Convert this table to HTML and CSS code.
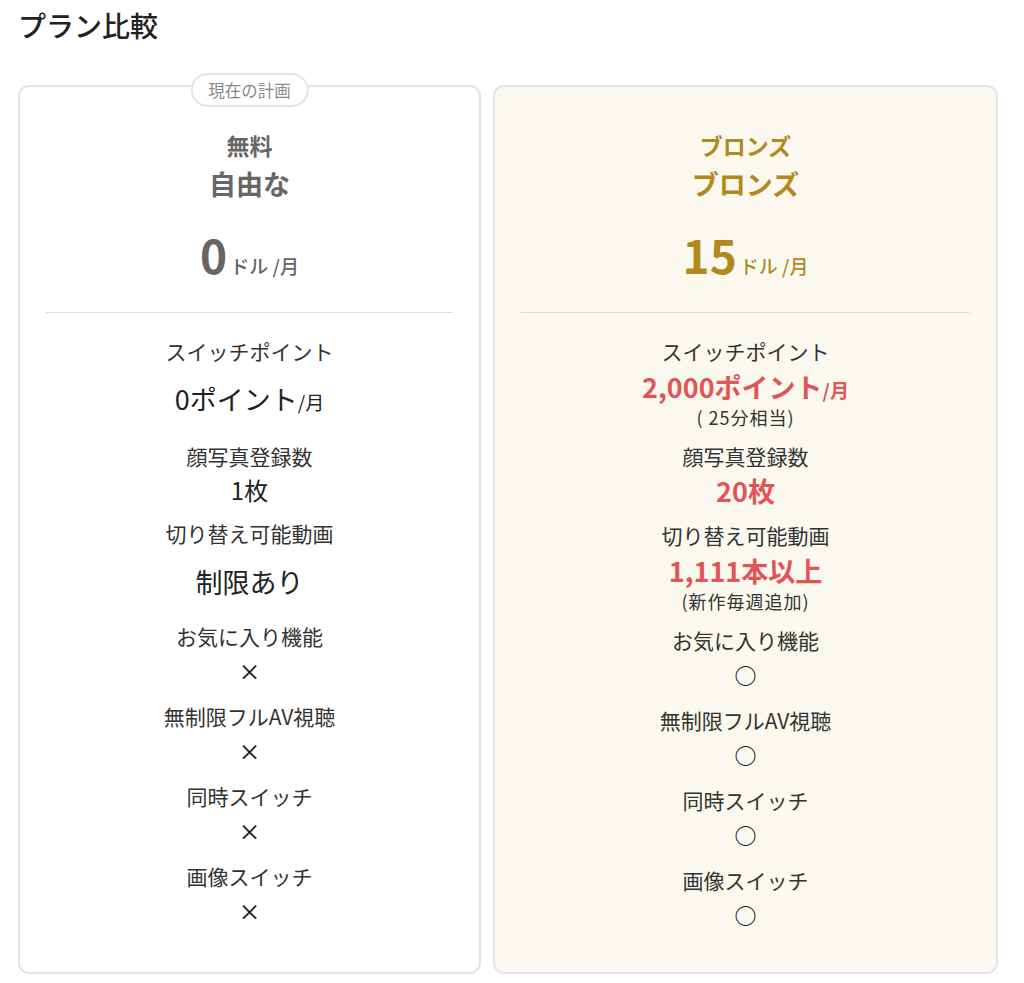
FILE: index.html
```html
<!DOCTYPE html>
<html lang="ja">
<head>
<meta charset="utf-8">
<title>プラン比較</title>
<link rel="stylesheet" href="styles.css">
</head>
<body>
<main class="page">
  <h1 class="title">プラン比較</h1>
  <div class="plans">
    <section class="card card-free">
      <span class="badge">現在の計画</span>
      <div class="head">
        <div class="plan-name">無料</div>
        <div class="plan-sub">自由な</div>
        <div class="price"><span class="amount">0</span><span class="unit">ドル /月</span></div>
      </div>
      <div class="divider"></div>
      <div class="features">
        <div class="feat">
          <div class="label">スイッチポイント</div>
          <div class="val val-points">0ポイント<span class="per">/月</span></div>
        </div>
        <div class="feat">
          <div class="label">顔写真登録数</div>
          <div class="val val-photos">1枚</div>
        </div>
        <div class="feat">
          <div class="label">切り替え可能動画</div>
          <div class="val val-videos">制限あり</div>
        </div>
        <div class="feat">
          <div class="label">お気に入り機能</div>
          <div class="val mark mark-x">×</div>
        </div>
        <div class="feat">
          <div class="label">無制限フルAV視聴</div>
          <div class="val mark mark-x">×</div>
        </div>
        <div class="feat">
          <div class="label">同時スイッチ</div>
          <div class="val mark mark-x">×</div>
        </div>
        <div class="feat">
          <div class="label">画像スイッチ</div>
          <div class="val mark mark-x">×</div>
        </div>
      </div>
    </section>
    <section class="card card-bronze">
      <div class="head">
        <div class="plan-name">ブロンズ</div>
        <div class="plan-sub">ブロンズ</div>
        <div class="price"><span class="amount">15</span><span class="unit">ドル /月</span></div>
      </div>
      <div class="divider"></div>
      <div class="features">
        <div class="feat">
          <div class="label">スイッチポイント</div>
          <div class="val hi hi-points">2,000ポイント<span class="per">/月</span></div>
          <div class="note">( 25分相当)</div>
        </div>
        <div class="feat">
          <div class="label">顔写真登録数</div>
          <div class="val hi hi-photos">20枚</div>
        </div>
        <div class="feat">
          <div class="label">切り替え可能動画</div>
          <div class="val hi hi-videos">1,111本以上</div>
          <div class="note note-lg">(新作毎週追加)</div>
        </div>
        <div class="feat">
          <div class="label">お気に入り機能</div>
          <div class="val mark mark-o">○</div>
        </div>
        <div class="feat">
          <div class="label">無制限フルAV視聴</div>
          <div class="val mark mark-o">○</div>
        </div>
        <div class="feat">
          <div class="label">同時スイッチ</div>
          <div class="val mark mark-o">○</div>
        </div>
        <div class="feat">
          <div class="label">画像スイッチ</div>
          <div class="val mark mark-o">○</div>
        </div>
      </div>
    </section>
  </div>
</main>
</body>
</html>
```

FILE: styles.css
```css
* { box-sizing: border-box; }

html, body {
  margin: 0;
  padding: 0;
  background: #ffffff;
}

body {
  font-family: "Noto Sans CJK JP", "Noto Sans", sans-serif;
  color: #333333;
}

.page {
  padding: 5px 26px 0 18px;
}

.title {
  margin: 0;
  font-size: 28px;
  line-height: 40px;
  font-weight: 500;
  color: #222222;
}

.plans {
  margin-top: 40px;
  display: grid;
  grid-template-columns: 463px 505px;
  column-gap: 12px;
  align-items: stretch;
}

.card {
  position: relative;
  border: 2px solid #e4e4e4;
  border-radius: 11px;
  padding: 41px 26px 40px;
  text-align: center;
  background: #ffffff;
}

.card-bronze {
  background: #fbf9ef;
}

.badge {
  position: absolute;
  top: -14px;
  left: 50%;
  transform: translateX(-50%);
  height: 34px;
  padding: 0 16px;
  border: 2px solid #e4e4e4;
  border-radius: 17px;
  background: #ffffff;
  color: #8a8a8a;
  font-size: 16.5px;
  line-height: 30px;
  white-space: nowrap;
}

.head {
  color: #666666;
}

.card-bronze .head {
  color: #b2891d;
}

.plan-name {
  font-size: 23px;
  line-height: 34px;
  font-weight: 700;
}

.plan-sub {
  margin-top: 2px;
  font-size: 27px;
  line-height: 40px;
  font-weight: 700;
}

.price {
  margin-top: 22px;
  height: 56px;
  display: flex;
  justify-content: center;
  align-items: baseline;
}

.amount {
  font-size: 46px;
  line-height: 56px;
  font-weight: 700;
}

.unit {
  margin-left: 3px;
  font-size: 19px;
  font-weight: 500;
}

.divider {
  margin-top: 30px;
  height: 1px;
  background: #dddddd;
}

.features {
  padding-top: 22px;
}

.feat {
  margin-bottom: 12px;
}

.feat:last-child {
  margin-bottom: 0;
}

.label {
  font-size: 21px;
  line-height: 32px;
  color: #333333;
}

.val {
  color: #222222;
}

.val-points {
  margin-top: 12px;
  margin-bottom: 18px;
  font-size: 27px;
  line-height: 40px;
}

.per {
  font-size: 19px;
}

.val-photos {
  font-size: 24px;
  line-height: 34px;
  margin-top: 1px;
  margin-bottom: -2px;
}

.val-videos {
  margin-top: 13px;
  margin-bottom: 18px;
  font-size: 27px;
  line-height: 40px;
}

.mark {
  height: 36px;
  line-height: 36px;
}

.mark-x {
  font-size: 22px;
  font-weight: 500;
}

.mark-o {
  font-size: 22px;
  font-weight: 700;
}

.hi {
  color: #e05656;
  font-weight: 700;
}

.hi-points {
  margin-top: 3px;
  font-size: 27px;
  line-height: 33px;
}

.hi-points .per {
  font-size: 19px;
}

.note {
  font-size: 18px;
  line-height: 22px;
  letter-spacing: 1px;
  color: #333333;
  margin-bottom: 2px;
}

.note-lg {
  margin-bottom: 0;
}

.hi-photos {
  font-size: 27px;
  line-height: 38px;
  margin-bottom: -3px;
}

.hi-videos {
  margin-top: 1px;
  font-size: 27px;
  line-height: 38px;
}
```
